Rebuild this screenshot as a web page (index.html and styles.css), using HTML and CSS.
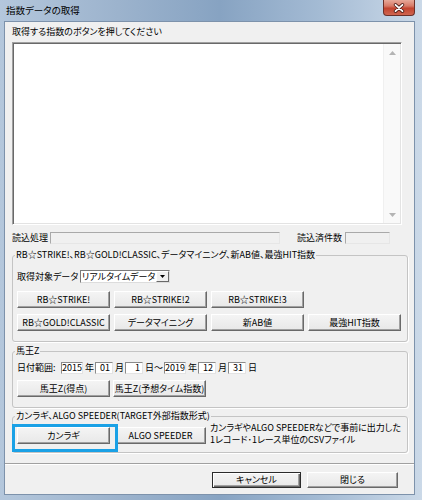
FILE: index.html
```html
<!DOCTYPE html>
<html lang="ja">
<head>
<meta charset="utf-8">
<title>指数データの取得</title>
<link rel="stylesheet" href="styles.css">
</head>
<body>
<div class="window">
  <div class="titlebar">
    <span class="title">指数データの取得</span>
    <div class="close">
      <svg width="14" height="10" viewBox="0 0 14 10"><path d="M3.5 1.8 L10.5 8.2 M10.5 1.8 L3.5 8.2" stroke="#4a1c16" stroke-width="3.4" stroke-linecap="round"/><path d="M3.5 1.8 L10.5 8.2 M10.5 1.8 L3.5 8.2" stroke="#fff" stroke-width="1.8" stroke-linecap="round"/></svg>
    </div>
  </div>
  <div class="client">
    <div class="prompt">取得する指数のボタンを押してください</div>
    <div class="textarea">
      <div class="ta-body"></div>
      <div class="vscroll">
        <div class="sb-btn"><svg width="7" height="4" viewBox="0 0 7 4"><path d="M0 4 L3.5 0 L7 4 Z" fill="#b4b4b4"/></svg></div>
        <div class="sb-track"></div>
        <div class="sb-btn"><svg width="7" height="4" viewBox="0 0 7 4"><path d="M0 0 L3.5 4 L7 0 Z" fill="#b4b4b4"/></svg></div>
      </div>
    </div>
    <div class="status">
      <span class="lbl-load">読込処理</span>
      <span class="field field-long"></span>
      <span class="lbl-count">読込済件数</span>
      <span class="field field-short"></span>
    </div>

    <fieldset class="group g1">
      <legend>RB☆STRIKE!、RB☆GOLD!CLASSIC、データマイニング、新AB値、最強HIT指数</legend>
      <div class="target-row">
        <span class="lbl-target">取得対象データ</span>
        <div class="combo">
          <span class="combo-text">リアルタイムデータ</span>
          <span class="combo-btn"><svg width="5" height="3" viewBox="0 0 5 3"><path d="M0 0 L5 0 L2.5 3 Z" fill="#000"/></svg></span>
        </div>
      </div>
      <div class="btn-grid">
        <button class="btn">RB☆STRIKE!</button>
        <button class="btn">RB☆STRIKE!2</button>
        <button class="btn">RB☆STRIKE!3</button>
        <button class="btn row2">RB☆GOLD!CLASSIC</button>
        <button class="btn">データマイニング</button>
        <button class="btn">新AB値</button>
        <button class="btn">最強HIT指数</button>
      </div>
    </fieldset>

    <fieldset class="group g2">
      <legend>馬王Z</legend>
      <div class="date-row">
        <span class="lbl-date">日付範囲:</span>
        <span class="dbox dbox-year">2015</span><span class="unit">年</span>
        <span class="dbox">01</span><span class="unit">月</span>
        <span class="dbox">1</span><span class="unit">日～</span>
        <span class="dbox dbox-year">2019</span><span class="unit">年</span>
        <span class="dbox">12</span><span class="unit">月</span>
        <span class="dbox">31</span><span class="unit">日</span>
      </div>
      <div class="btn-row">
        <button class="btn">馬王Z(得点)</button>
        <button class="btn">馬王Z(予想タイム指数)</button>
      </div>
    </fieldset>

    <fieldset class="group g3">
      <legend>カンラギ、ALGO SPEEDER(TARGET外部指数形式)</legend>
      <div class="ext-row">
        <div class="hl-wrap">
          <button class="btn">カンラギ</button>
          <span class="highlight"></span>
        </div>
        <button class="btn btn-algo">ALGO SPEEDER</button>
        <div class="ext-note">
          <div>カンラギやALGO SPEEDERなどで事前に出力した</div>
          <div>1レコード･1レース単位のCSVファイル</div>
        </div>
      </div>
    </fieldset>

    <div class="bottom">
      <button class="btn btn-default btn-cancel">キャンセル</button>
      <button class="btn btn-close">閉じる</button>
    </div>
  </div>
</div>
</body>
</html>
```

FILE: styles.css
```css
* { box-sizing: border-box; }
html, body { margin: 0; padding: 0; }
body {
  width: 422px;
  height: 500px;
  overflow: hidden;
  font-family: "Noto Sans CJK JP", "Noto Sans", sans-serif;
  font-size: 9px;
  color: #000;
  font-feature-settings: "palt";
}
.window {
  width: 422px;
  height: 500px;
  display: flex;
  flex-direction: column;
  padding: 0 7px 5px 4px;
  background: linear-gradient(90deg, #b4c7dc 0%, #9cb3cd 28%, #87a3c2 52%, #a4bbd4 76%, #cbd9e8 100%);
}
.titlebar {
  height: 21px;
  display: flex;
  align-items: flex-start;
}
.title {
  flex: 1;
  line-height: 20px;
  padding-left: 2px;
  font-size: 9.5px;
}
.close {
  width: 32px;
  height: 16px;
  border: 1px solid #6b3029;
  border-top: 0;
  border-radius: 0 0 4px 4px;
  background: linear-gradient(#e7a999 0%, #d77a67 40%, #c2442f 55%, #cf6550 100%);
  display: flex;
  align-items: center;
  justify-content: center;
}
.client {
  flex: 1;
  display: flex;
  flex-direction: column;
  background: #f0f0f0;
  border: 1px solid #7d92ab;
  padding: 0 6px 0 7px;
}
.prompt {
  margin-top: 4px;
  height: 12px;
  line-height: 12px;
}
.textarea {
  margin-top: 4px;
  width: 390px;
  height: 183px;
  display: flex;
  padding: 1px;
  background: #fff;
  border: 1px solid;
  border-color: #a0a0a0 #fff #fff #a0a0a0;
  box-shadow: inset 1px 1px #696969, inset -1px -1px #e3e3e3;
}
.ta-body { flex: 1; }
.vscroll {
  width: 17px;
  display: flex;
  flex-direction: column;
  background: #f9f9f9;
  border-left: 1px solid #f0f0f0;
}
.sb-btn {
  height: 17px;
  display: flex;
  align-items: center;
  justify-content: center;
}
.sb-track { flex: 1; }
.status {
  margin-top: 7px;
  height: 12px;
  display: flex;
  align-items: center;
  line-height: 12px;
}
.lbl-load { width: 38px; }
.field {
  height: 12px;
  background: #f0f0f0;
  border: 1px solid;
  border-color: #a9a9a9 #e6e6e6 #e6e6e6 #a9a9a9;
}
.field-long { width: 230px; }
.lbl-count { margin-left: 17px; width: 48px; }
.field-short { width: 45px; }

.group {
  margin: 5px 0 0;
  padding: 9px 6px 10px 4px;
  border: 1px solid #c4c4c4;
  border-radius: 3px;
  box-shadow: 1px 1px #fff;
  min-width: 0;
}
.group legend {
  padding: 0 1px;
  margin-left: -2px;
  height: 12px;
  line-height: 12px;
}
.target-row {
  display: flex;
  align-items: center;
  height: 13px;
}
.lbl-target { width: 63px; line-height: 12px; }
.combo {
  width: 90px;
  height: 13px;
  display: flex;
  background: #fff;
  border: 1px solid;
  border-color: #7a7a7a #dcdcdc #dcdcdc #7a7a7a;
}
.combo-text {
  flex: 1;
  padding-left: 1px;
  line-height: 11px;
}
.combo-btn {
  width: 13px;
  background: #f0f0f0;
  border: 1px solid;
  border-color: #fff #696969 #696969 #fff;
  display: flex;
  align-items: center;
  justify-content: center;
}
.btn-grid {
  margin-top: 8px;
  display: grid;
  grid-template-columns: repeat(4, 93px);
  grid-auto-rows: 17px;
  gap: 6px 4px;
}
.btn {
  font: inherit;
  font-feature-settings: "palt";
  color: #000;
  height: 17px;
  width: 93px;
  padding: 0;
  margin: 0;
  line-height: 12px;
  border: 1px solid;
  border-color: #fff #696969 #696969 #fff;
  box-shadow: inset -1px -1px #a0a0a0;
  background: linear-gradient(#f4f4f4, #e8e8e8);
  display: flex;
  align-items: center;
  justify-content: center;
}
.btn.row2 { grid-column: 1; }

.g2 { margin-top: 3px; padding-top: 5px; }
.date-row {
  display: flex;
  align-items: center;
  height: 12px;
  line-height: 12px;
}
.lbl-date { width: 44px; }
.dbox {
  width: 18px;
  height: 12px;
  line-height: 10px;
  padding-right: 2px;
  text-align: right;
  background: #fff;
  border: 1px solid;
  border-color: #8a8a8a #e3e3e3 #e3e3e3 #8a8a8a;
}
.dbox-year { width: 22px; }
.unit { margin: 0 1px 0 2px; }
.btn-row {
  margin-top: 6px;
  display: flex;
  gap: 3px;
}

.g3 { margin-top: 2px; padding-top: 0; padding-bottom: 6px; }
.ext-row {
  display: flex;
  align-items: flex-start;
}
.hl-wrap {
  position: relative;
  margin-top: 5px;
}
.highlight {
  position: absolute;
  left: -5px;
  top: -3px;
  width: 106px;
  height: 28px;
  border: 3px solid #1aa1e6;
}
.btn-algo { margin-top: 5px; margin-left: 5px; width: 91px; }
.ext-note {
  margin-left: 4px;
  line-height: 12px;
}

.bottom {
  flex: 1;
  margin: 10px -6px 0 -7px;
  padding: 8px 16px 6px 0;
  border-top: 1px solid #a0a0a0;
  box-shadow: inset 0 1px #fff;
  display: flex;
  justify-content: flex-end;
  align-items: flex-start;
  gap: 6px;
}
.btn-cancel { width: 89px; height: 16px; }
.btn-close { width: 91px; height: 16px; }
.btn-default {
  border-color: #2b2b2b;
  box-shadow: inset 1px 1px #fff, inset -1px -1px #696969, inset -2px -2px #a0a0a0;
}
```
